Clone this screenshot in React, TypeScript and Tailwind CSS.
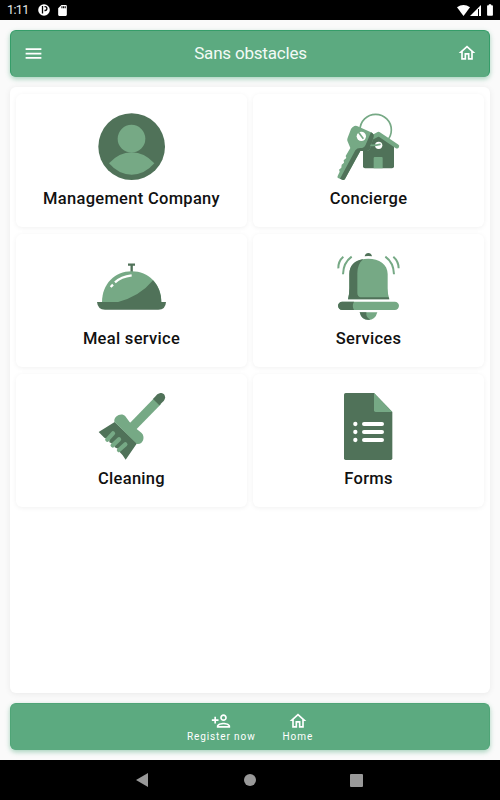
import type { ReactNode } from "react"
import { MdMenu, MdOutlineHome, MdSdCard, MdBatteryFull } from "react-icons/md"

const LIGHT = "#76a985"
const DARK = "#507259"

const ManagerIcon = () => (
  <svg viewBox="51 39 210 204" className="h-[68px] w-[70px]">
    <circle cx="155" cy="140" r="100" fill={DARK} />
    <circle cx="154.5" cy="116" r="41.5" fill={LIGHT} />
    <path d="M87 190Q117 157 155 157T223 190Q194 224 155 224T87 190Z" fill={LIGHT} />
  </svg>
)

const KeysIcon = () => (
  <svg viewBox="42 39 210 204" className="h-[68px] w-[70px]">
    <circle cx="167" cy="90" r="47" fill="none" stroke={LIGHT} strokeWidth="5" />
    {/* House */}
    <path d="M129 134L176 103L222 138V199Q222 205 216 205H135Q129 205 129 199Z" fill={DARK} />
    <path d="M161 205V174Q161 171 164 171H185Q188 171 188 174V205Z" fill={LIGHT} />
    <path d="M150 116L176 102L231 139" fill="none" stroke={LIGHT} strokeWidth="13" strokeLinecap="round" strokeLinejoin="round" />
    {/* Key */}
    <path d="M103 78Q107 76 111 78L153 97Q164 102 161 111L150 147Q147 153 140 153H121L75 237Q72 241 67 239L54 234Q51 232 53 228L59 215L57 209L64 203L65 194L72 188L71 181L79 174L77 168L91 144L82 122Q81 117 83 113L93 87Q95 82 103 78Z" fill={LIGHT} />
    <path d="M153 97Q164 102 161 111L150 147Q147 153 140 153H121L75 237Q72 241 67 239L60 236L106 151Q111 144 121 144Q133 144 137 134Z" fill={DARK} />
    <circle cx="124" cy="109" r="14" fill="white" />
    <path d="M115 96L130 116" stroke={LIGHT} strokeWidth="5" />
    <circle cx="176" cy="136" r="11" fill="white" />
    <path d="M153 136Q166 137 180 133" fill="none" stroke={LIGHT} strokeWidth="5" strokeLinecap="round" />
  </svg>
)

const MealIcon = () => (
  <svg viewBox="51 39 210 204" className="h-[68px] w-[70px]">
    <path d="M144 74H165M155 75V96" stroke={DARK} strokeWidth="7" />
    <path d="M66 187C66 132 104 94 155 94S244 132 244 187Z" fill={LIGHT} />
    <path d="M219 121Q180 169 112 187H244Q244 147 219 121Z" fill={DARK} />
    <path d="M51 186H258Q257 209 235 209H75Q53 209 51 186Z" fill={DARK} />
    <path d="M105 127Q123 110 155 106M92 141L99 134" fill="none" stroke="white" strokeWidth="7" />
  </svg>
)

const BellIcon = () => (
  <svg viewBox="42 39 210 204" className="h-[68px] w-[70px]">
    <path d="M134 49Q136 39 145 39T156 49Q145 47 134 49Z" fill={DARK} />
    <path d="M84 178Q88 165 88 145V102C88 73 113 56 145 56S203 73 203 102V145Q203 165 208 178Z" fill={LIGHT} />
    <path d="M84 178Q88 165 88 145V102C88 76 104 61 130 57Q112 72 112 100V158Q112 169 121 172H206L208 178Z" fill={DARK} />
    <rect x="54" y="185" width="183" height="25" rx="12.5" fill={LIGHT} />
    <path d="M102 185H66.5A12.5 12.5 0 0 0 66.5 210H102Q95 197 102 185Z" fill={DARK} />
    <path d="M119 217H172Q166 240 145 240T119 217Z" fill={LIGHT} />
    <path d="M119 217H139Q137 233 151 239Q126 243 119 217Z" fill={DARK} />
    <path d="M70 50Q54 64 55 85M95 50Q70 68 69 103M220 50Q236 64 236 85M196 50Q221 68 222 103" fill="none" stroke={LIGHT} strokeWidth="6" />
  </svg>
)

const BroomIcon = () => (
  <svg viewBox="51 39 210 204" className="h-[68px] w-[70px]">
    <path d="M150 148L233 63" stroke={LIGHT} strokeWidth="27" />
    <path d="M219 57L232 43C248 31 263 48 251 63L238 76Z" fill={DARK} />
    <path d="M104 126L171 190L137 239L128 226L119 216L120 209L104 202V194L88 187V180L73 173L56 156Z" fill={DARK} />
    <path d="M82 179L99 160M98 196L117 178M117 210L136 193" stroke={LIGHT} strokeWidth="13" strokeLinecap="round" />
    <path d="M103 125C101 107 126 97 136 109L148 125L170 147L184 158C198 170 188 195 171 192Z" fill={LIGHT} />
  </svg>
)

const FormIcon = () => (
  <svg viewBox="42 39 210 204" className="h-[68px] w-[70px]">
    <path d="M77 39H162L217 96V235Q217 240 212 240H77Q72 240 72 235V44Q72 39 77 39Z" fill={DARK} />
    <path d="M162 39L217 96H167Q162 96 162 91Z" fill={LIGHT} />
    <path d="M132 132H186M132 156H186M132 180H186" stroke="white" strokeWidth="12" strokeLinecap="round" />
    <g fill="white">
      <circle cx="106" cy="132" r="6.5" />
      <circle cx="106" cy="156" r="6.5" />
      <circle cx="106" cy="180" r="6.5" />
    </g>
  </svg>
)

const tiles: { label: string; icon: ReactNode }[] = [
  { label: "Management Company", icon: <ManagerIcon /> },
  { label: "Concierge", icon: <KeysIcon /> },
  { label: "Meal service", icon: <MealIcon /> },
  { label: "Services", icon: <BellIcon /> },
  { label: "Cleaning", icon: <BroomIcon /> },
  { label: "Forms", icon: <FormIcon /> },
]

const StatusBar = () => (
  <div className="flex h-5 items-center justify-between bg-black pr-[3px] pl-[7px] text-white">
    <div className="flex items-center">
      <span className="w-[31px] text-[12.5px] leading-5 tracking-[-0.6px] text-gray-200">1:11</span>
      <svg viewBox="0 0 12 12" className="h-3 w-3">
        <circle cx="6" cy="6" r="5.8" fill="white" />
        <path d="M4.5 2V9.5M6.5 2.7H7A1.9 1.9 0 0 1 7 6.5H6.5" fill="none" stroke="black" strokeWidth="1.3" />
      </svg>
      <MdSdCard className="ml-[6px] h-[13px] w-[13px]" />
    </div>
    <div className="flex items-center">
      <svg viewBox="0 0 12 10" className="h-[11px] w-[13px]">
        <path d="M0 2Q6 -2 12 2L6 10Z" fill="white" />
      </svg>
      <svg viewBox="0 0 11 11" className="h-[11px] w-[11px]">
        <path d="M0 11L11 0V11Z" fill="white" />
        <path d="M8.5 4V11" stroke="black" strokeWidth="1" />
      </svg>
      <MdBatteryFull className="ml-[2px] h-[14px] w-[14px]" />
    </div>
  </div>
)

const Header = () => (
  <header className="flex h-[47px] shrink-0 items-center justify-between rounded-md border border-[#359d69] border-b-[#5caa80] bg-[#5caa80] px-3 text-white shadow-[0_2px_5px_rgba(40,150,95,0.4)]">
    <button>
      <MdMenu className="h-[21px] w-[21px]" />
    </button>
    <h1 className="text-[17px] tracking-[-0.2px] text-[#f3faf6]">Sans obstacles</h1>
    <button className="pb-px">
      <MdOutlineHome className="h-5 w-5" />
    </button>
  </header>
)

const BottomBar = () => (
  <nav className="flex h-[47px] shrink-0 justify-center gap-[27px] rounded-md border border-[#4fa577] border-b-[#5caa80] bg-[#5caa80] pt-[7px] text-[10px] leading-3 tracking-[0.9px] text-white shadow-[0_2px_5px_rgba(40,150,95,0.4)]">
    <button className="flex flex-col items-center">
      <svg viewBox="0 0 24 24" fill="currentColor" className="h-5 w-5">
        <path d="M15 12c2.21 0 4-1.79 4-4s-1.79-4-4-4-4 1.79-4 4 1.79 4 4 4zm0-6c1.1 0 2 .9 2 2s-.9 2-2 2-2-.9-2-2 .9-2 2-2zm0 8c-2.67 0-8 1.34-8 4v2h16v-2c0-2.66-5.33-4-8-4zm-6 4c.22-.72 3.31-2 6-2 2.7 0 5.8 1.29 6 2H9zm-3-3v-3h3v-2H6V7H4v3H1v2h3v3z" />
      </svg>
      <span>Register now</span>
    </button>
    <button className="flex flex-col items-center">
      <MdOutlineHome className="h-5 w-5" />
      <span>Home</span>
    </button>
  </nav>
)

const App = () => {
  return (
    <div className="flex h-screen flex-col overflow-hidden bg-[#fafafa] font-['Roboto',sans-serif]">
      <StatusBar />
      <div className="flex flex-1 flex-col gap-[10px] p-[10px]">
        <Header />
        <main className="flex-1 rounded-md bg-white px-[6px] pt-[7px] shadow-[0_1px_6px_rgba(0,0,0,0.07)]">
          <div className="grid grid-cols-2 gap-x-[6px] gap-y-[7px]">
            {tiles.map((tile) => (
              <button
                key={tile.label}
                className="flex h-[133px] flex-col items-center rounded-md bg-white pt-[19px] shadow-[0_1px_5px_rgba(0,0,0,0.06)]"
              >
                {tile.icon}
                <span className="mt-[6px] text-[16.5px] leading-6 font-medium tracking-[0.3px] text-[#111]">
                  {tile.label}
                </span>
              </button>
            ))}
          </div>
        </main>
        <BottomBar />
      </div>
      {/* Android navigation */}
      <div className="flex h-10 items-center bg-black pl-[136px]">
        <svg viewBox="0 0 12 14" className="h-[14px] w-[12px]">
          <path d="M12 0V14L0 7Z" fill="#999" />
        </svg>
        <div className="ml-[96px] h-3 w-3 rounded-full bg-[#999]"></div>
        <div className="ml-[94px] h-[13px] w-[13px] rounded-[1px] bg-[#999]"></div>
      </div>
    </div>
  )
}

export default App
